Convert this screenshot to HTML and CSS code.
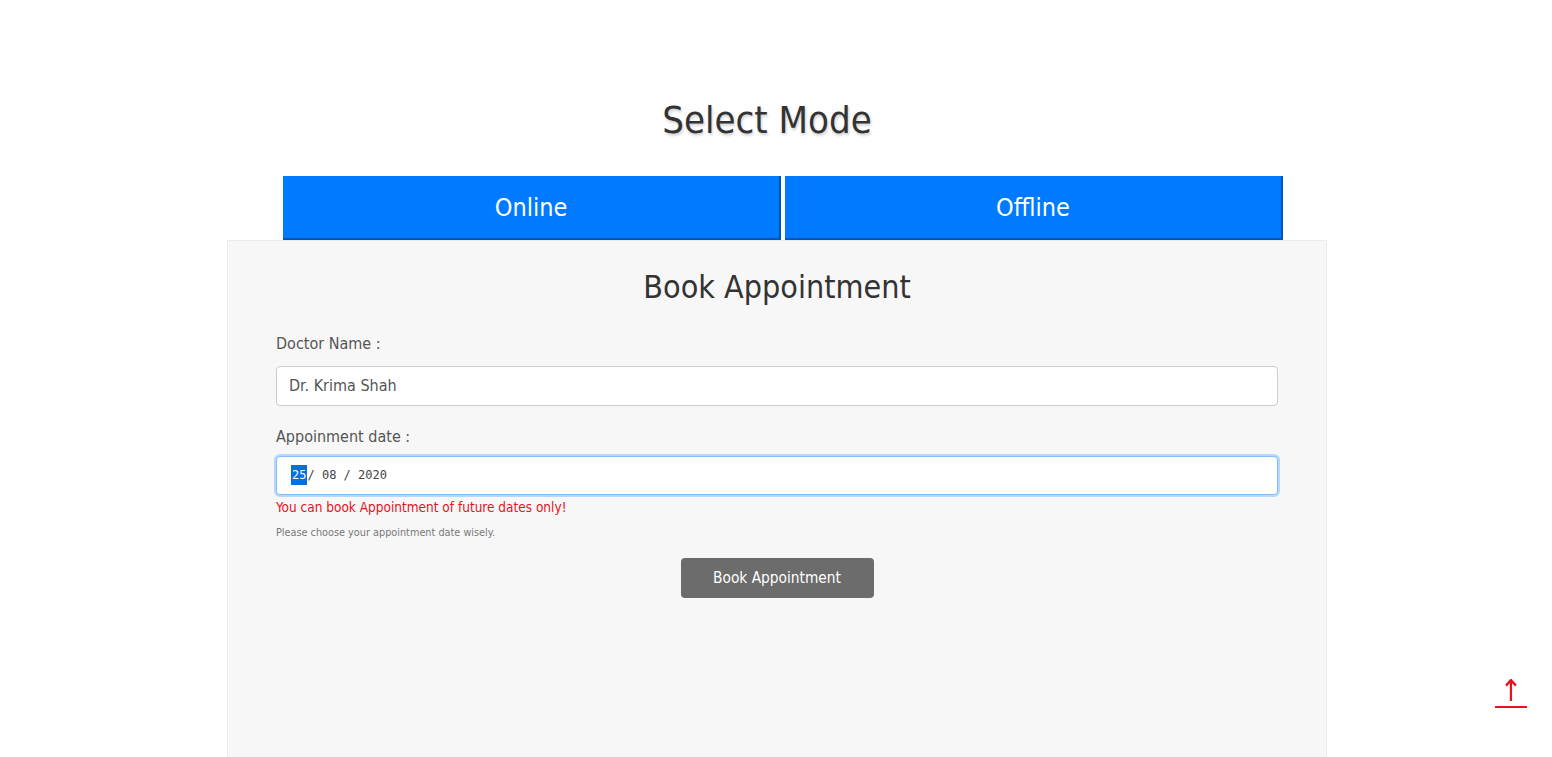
FILE: index.html
```html
<!DOCTYPE html>
<html>
<head>
<meta charset="utf-8">
<link rel="stylesheet" href="styles.css">
</head>
<body>
<div class="wrap">
  <h1 class="title">Select Mode</h1>
  <div class="modes">
    <button class="mode">Online</button>
    <button class="mode">Offline</button>
  </div>
  <div class="panel">
    <h2 class="panel-title">Book Appointment</h2>
    <div class="field">
      <label class="label">Doctor Name :</label>
      <div class="input">Dr. Krima Shah</div>
    </div>
    <div class="field">
      <label class="label label-date">Appoinment date :</label>
      <div class="input focused date"><span class="sel">25</span>/ 08 / 2020</div>
      <div class="error">You can book Appointment of future dates only!</div>
      <div class="help">Please choose your appointment date wisely.</div>
    </div>
    <div class="actions">
      <button class="submit">Book Appointment</button>
    </div>
  </div>
</div>
<div class="totop">&#8593;</div>
</body>
</html>
```
FILE: styles.css
```css
html, body {
  margin: 0;
  padding: 0;
  background: #fff;
  font-family: "DejaVu Sans Condensed", "Liberation Sans", sans-serif;
  color: #333;
  overflow: hidden;
}
.wrap {
  width: 1100px;
  margin: 0 auto;
  padding-top: 90px;
  padding-left: 2px;
}
.title {
  margin: 0;
  padding-right: 20px;
  text-align: center;
  font-weight: 400;
  font-size: 38px;
  line-height: 60px;
  color: #333;
  text-shadow: 1px 2px 3px rgba(0,0,0,0.2);
}
.modes {
  display: flex;
  gap: 4px;
  padding-left: 56px;
  margin-top: 26px;
}
.mode {
  width: 498px;
  height: 64px;
  background: #007bff;
  border: none;
  border-right: 2px solid #0056b3;
  border-bottom: 2px solid #0056b3;
  color: #fff;
  font-family: inherit;
  font-size: 25px;
  padding: 0;
}
.panel {
  background: #f7f7f7;
  border: 1px solid #ececec;
  height: 540px;
  padding: 0 48px;
}
.panel-title {
  margin: 22px 0 21px;
  text-align: center;
  font-weight: 400;
  font-size: 32px;
  line-height: 48px;
  color: #333;
}
.field {
  margin-bottom: 16px;
}
.label {
  display: block;
  font-size: 16px;
  color: #555;
  line-height: 24px;
  margin-bottom: 10px;
}
.label-date {
  padding-top: 3px;
  margin-bottom: 7px;
}
.input {
  box-sizing: border-box;
  height: 40px;
  background: #fff;
  border: 1px solid #ccc;
  border-radius: 4px;
  padding: 0 12px;
  font-size: 16px;
  line-height: 38px;
  color: #555;
}
.focused {
  height: 39px;
  border-color: #80bdff;
  box-shadow: 0 0 0 2px rgba(0,123,255,0.25);
}
.date {
  font-family: "DejaVu Sans Mono", monospace;
  font-size: 12px;
  line-height: 37px;
  color: #444;
  padding-left: 14px;
}
.sel {
  background: #0a6fd8;
  color: #fff;
  padding: 3px 1px;
}
.error {
  color: #e8111e;
  font-size: 13.5px;
  line-height: 22px;
  margin-top: 1px;
}
.help {
  color: #777;
  font-size: 10.8px;
  line-height: 18px;
  margin-top: 6px;
}
.actions {
  display: flex;
  justify-content: center;
  margin-top: 14px;
}
.submit {
  width: 193px;
  height: 40px;
  background: #6c6c6c;
  color: #fff;
  border: none;
  border-radius: 4px;
  font-family: inherit;
  font-size: 15.3px;
}
.totop {
  position: fixed;
  right: 25px;
  bottom: 49px;
  width: 32px;
  text-align: center;
  color: #e8111e;
  font-size: 30px;
  line-height: 30px;
  border-bottom: 2px solid #e8111e;
}
```
